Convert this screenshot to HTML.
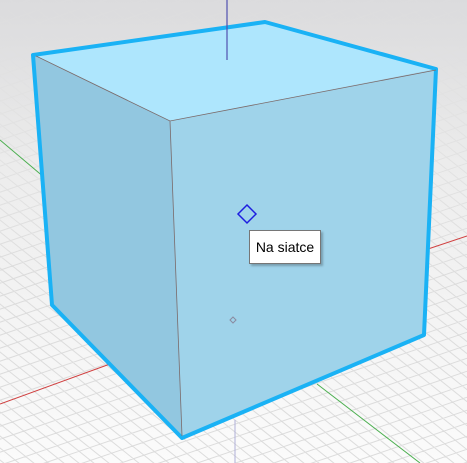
<!DOCTYPE html>
<html><head><style>
html,body{margin:0;padding:0;width:467px;height:463px;overflow:hidden;background:#f4f4f4;position:relative}
svg{display:block}
.tip{position:absolute;left:249px;top:230px;width:70px;height:32px;background:#fff;border:1px solid #767676;box-shadow:2px 2px 2px rgba(0,0,0,.25);font:14px "Liberation Sans",sans-serif;color:#000;line-height:32px;text-align:center;box-sizing:border-box;width:72px;height:34px}
</style></head><body>
<svg id="s" width="467" height="463" style="position:absolute;left:0;top:0">
<defs><linearGradient id="bg" x1="0" y1="0" x2="0" y2="1">
<stop offset="0" stop-color="#d6d6d8"/><stop offset="0.35" stop-color="#ececec"/><stop offset="1" stop-color="#fbfbfb"/></linearGradient>
<linearGradient id="fade" x1="0" y1="0" x2="0" y2="1">
<stop offset="0" stop-color="#dcdcde" stop-opacity="0.85"/><stop offset="0.3" stop-color="#eaeaea" stop-opacity="0.4"/><stop offset="0.6" stop-color="#f6f6f6" stop-opacity="0"/></linearGradient></defs>
<rect width="467" height="463" fill="url(#bg)"/>
<g id="grid" stroke="#dcdcdc" stroke-width="1" fill="none"></g>
<rect width="467" height="463" fill="url(#fade)"/>
<line x1="0" y1="140" x2="45" y2="178" stroke="#4caf50" stroke-width="1"/>
<line x1="317" y1="384" x2="420" y2="463" stroke="#4caf50" stroke-width="1"/>
<line x1="0" y1="404" x2="110" y2="364" stroke="#d04040" stroke-width="1"/>
<line x1="428" y1="249" x2="467" y2="236" stroke="#d04040" stroke-width="1"/>
<line x1="235" y1="420" x2="235" y2="463" stroke="#b0b0d8" stroke-width="1"/>
<polygon points="33,55 265,22 436,69 170,121" fill="#aee6fd"/>
<polygon points="33,55 170,121 182,438 52,305" fill="#92c7e0"/>
<polygon points="170,121 436,69 424,335 182,438" fill="#9fd3ea"/>
<polygon points="33,55 265,22 436,69 424,335 182,438 52,305" fill="none" stroke="#1ab2f5" stroke-width="4" stroke-linejoin="round"/>
<path d="M36 56 L170 121 L436 70 M170 121 L182 436" stroke="#7a6a6a" stroke-width="0.8" fill="none"/>
<line x1="227" y1="0" x2="227" y2="60" stroke="#5050b0" stroke-width="1.2"/>
<polygon points="247,205 256,214 247,223 238,214" fill="none" stroke="#1d1de0" stroke-width="1.5"/>
<polygon points="233,317 236,320 233,323 230,320" fill="none" stroke="#8a8aa0" stroke-width="1"/>
</svg>
<div class="tip">Na siatce</div>
<script>
var g=document.getElementById('grid'),h='';
for(var i=-50;i<50;i++){var x0=235+i*15;h+='M'+(x0-600)+' -60 L'+(x0+600)+' 900 ';}
for(var j=-50;j<50;j++){var y0=320+j*13;h+='M-20 '+(y0+165)+' L500 '+(y0-12)+' ';}
var p=document.createElementNS('http://www.w3.org/2000/svg','path');p.setAttribute('d',h);g.appendChild(p);
</script>
</body></html>
